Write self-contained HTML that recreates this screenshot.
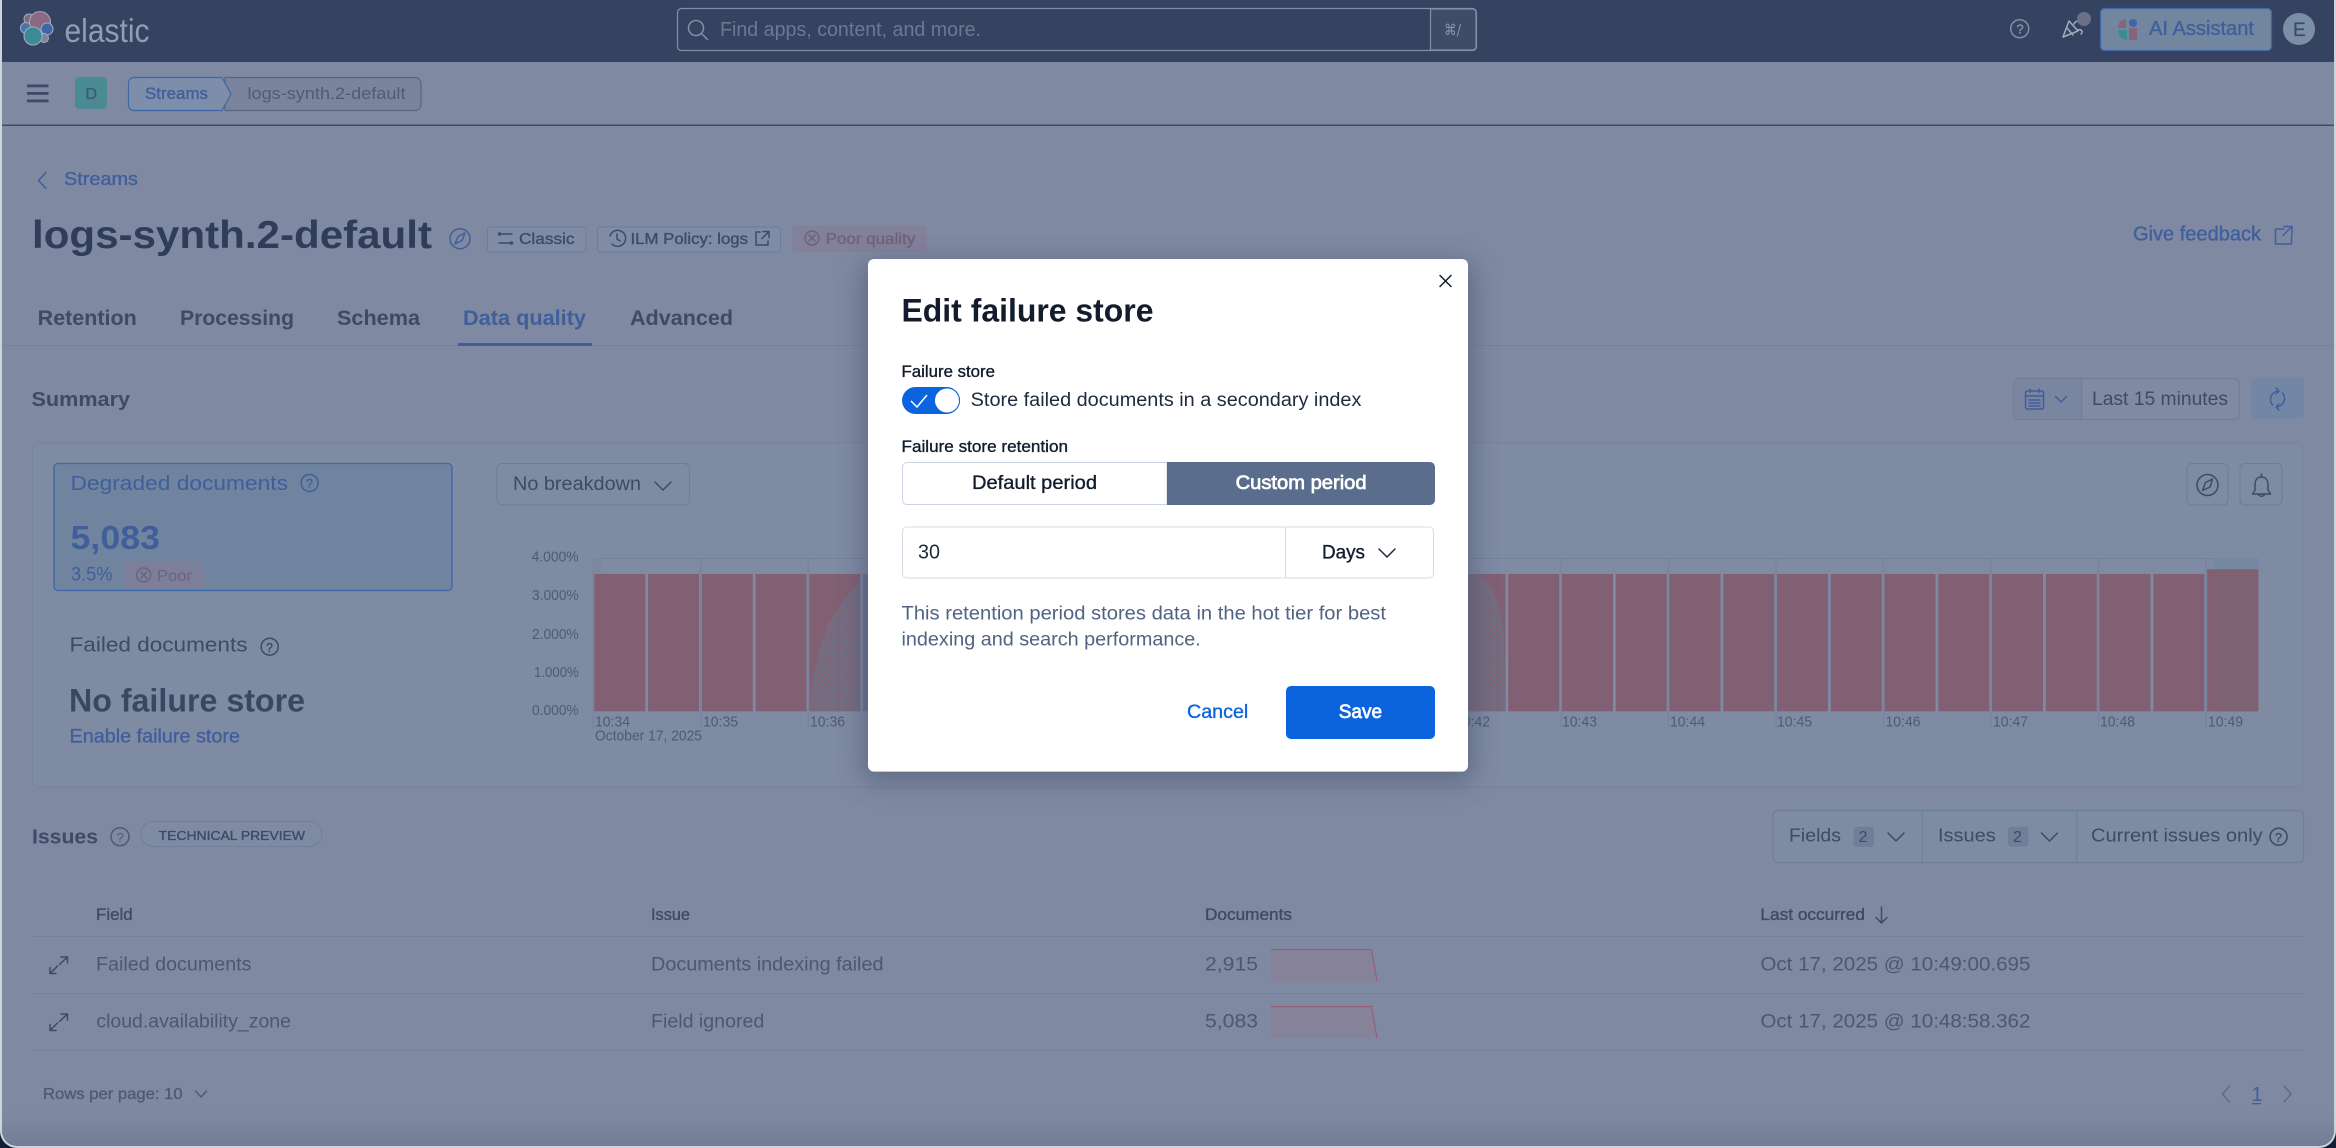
<!DOCTYPE html>
<html><head><meta charset="utf-8"><title>Edit failure store</title>
<style>
html,body{margin:0;padding:0;background:#7f89a2;width:2336px;height:1148px;overflow:hidden}
svg{display:block}
text{font-family:"Liberation Sans",sans-serif;fill:currentColor;color:#4c5872}
.m{stroke:currentColor;stroke-width:.35px}
.s{stroke:currentColor;stroke-width:.7px}
.B{font-weight:bold}
.b{color:#3f5f9b}.d{color:#3e4a66}.g{color:#4f5a74}.t{color:#2f3d5a}.k{color:#111c2c}
.ic{fill:none;stroke-width:1.5;stroke-linecap:round;stroke-linejoin:round}
</style></head><body>
<svg width="2336" height="1148" viewBox="0 0 2336 1148" xmlns="http://www.w3.org/2000/svg">
<defs>
<linearGradient id="bot" gradientUnits="userSpaceOnUse" x1="0" y1="1108" x2="0" y2="1146"><stop offset="0" stop-color="#7f89a2"/><stop offset=".3" stop-color="#7d88a0"/><stop offset="1" stop-color="#727d93"/></linearGradient>
<pattern id="dots" width="3" height="3" patternUnits="userSpaceOnUse"><rect width="3" height="3" fill="#82626f"/><rect x="0" y="0" width="1.8" height="1.8" fill="#68728e"/><rect x="1.5" y="1.5" width="1.3" height="1.3" fill="#74768a"/></pattern>
<pattern id="dots2" width="4" height="4" patternUnits="userSpaceOnUse"><rect width="4" height="4" fill="#7f606f"/><rect x="1" y="1" width="1.6" height="1.6" fill="#6e6c84"/></pattern>
<filter id="blur" x="-20%" y="-20%" width="140%" height="140%"><feGaussianBlur stdDeviation="13"/></filter>
</defs>

<!-- frame -->
<rect width="2336" height="1148" fill="#101f36"/>
<rect x="0" y="-20" width="2336" height="1168" rx="17" fill="#cfd3db"/>
<rect x="2" y="-20" width="2332" height="1166" rx="15" fill="url(#bot)"/>

<!-- top bar -->
<rect x="2" y="0" width="2332" height="62" fill="#354360"/>
<g stroke="#a3adc0" stroke-width="1">
<circle cx="29" cy="19" r="5" fill="#85687e"/>
<circle cx="26" cy="28" r="5.5" fill="#4a74ab"/>
<circle cx="40" cy="22" r="10.5" fill="#8a6a80"/>
<circle cx="47" cy="29" r="6" fill="#3f66a8"/>
<circle cx="44" cy="38" r="4.5" fill="#7e8699"/>
<circle cx="33" cy="36" r="9" fill="#3c8a94"/>
</g>
<text x="64.500" y="42" font-size="33" textLength="85" lengthAdjust="spacingAndGlyphs" style="color:#929db3">elastic</text>

<rect x="677.500" y="8.500" width="799" height="42" rx="4" fill="#354360" stroke="#838da6" stroke-width="1.200"/>
<path d="M1430.500 9h42a3.500 3.500 0 0 1 3.500 3.500v34a3.500 3.500 0 0 1-3.500 3.500h-42z" fill="#3f4c68" stroke="#838da6" stroke-width="1.200"/>
<g class="ic" stroke="#838da6"><circle cx="696" cy="28" r="7.500"/><path d="M701.500 33.500l6 6"/></g>
<text x="720" y="36" font-size="20" textLength="261" lengthAdjust="spacingAndGlyphs" style="color:#6d7892">Find apps, content, and more.</text>
<text x="1444" y="35" font-size="15" textLength="17" lengthAdjust="spacingAndGlyphs" style="color:#8a93ab;font-family:'DejaVu Sans',sans-serif">⌘/</text>

<g class="ic" stroke="#838da6"><circle cx="2019.700" cy="28.700" r="9"/></g>
<text x="2016.500" y="33.500" font-size="13" class="m" style="color:#8a93ab">?</text>
<g class="ic" stroke="#a3adc0"><path d="M2063 37l6-16 9 10zM2067 28l6 7M2074 24c1-2 2-3 4-3M2078 30c2-1 3 0 4 1 0 1 0 3-1 3"/></g>
<circle cx="2084" cy="19" r="7" fill="#6b7088"/>
<rect x="2100.500" y="8.500" width="171" height="42" rx="4" fill="#72869f" stroke="#3f66a8" stroke-width="1.300"/>
<path d="M2118 28c0-5 3-9 8-9v9z" fill="#86657b"/><circle cx="2133" cy="23" r="4" fill="#3f66a8"/>
<path d="M2127 30v10c-5 0-9-4-9-10z" fill="#3c8a94"/><rect x="2129" y="28" width="8" height="12" fill="#86657b"/>
<text x="2149" y="35" font-size="20" textLength="105" lengthAdjust="spacingAndGlyphs" class="b m">AI Assistant</text>
<circle cx="2299" cy="29" r="16" fill="#7a8fa5"/>
<text x="2293" y="36" font-size="19" class="d m">E</text>

<!-- subheader -->
<g fill="#3e4a66"><rect x="27" y="84.500" width="21.500" height="2.800"/><rect x="27" y="92" width="21.500" height="2.800"/><rect x="27" y="99.500" width="21.500" height="2.800"/></g>
<rect x="75" y="77" width="32" height="32" rx="4" fill="#4a8a93"/>
<text x="85.500" y="99" font-size="16" class="m" style="color:#3f5a70">D</text>
<path d="M225 77.500h190a6 6 0 0 1 6 6v21a6 6 0 0 1-6 6h-190z" fill="#7a849d" stroke="#5a6580" stroke-width="1.200"/>
<path d="M134 77.500h88l9 16.500-9 16.500h-88a5.500 5.500 0 0 1-5.500-5.500v-22a5.500 5.500 0 0 1 5.500-5.500z" fill="#7c8eaa" stroke="#3f66a8" stroke-width="1.200"/>
<text x="145" y="99" font-size="17" textLength="63" lengthAdjust="spacingAndGlyphs" class="b m">Streams</text>
<text x="247.500" y="99" font-size="17" textLength="158" lengthAdjust="spacingAndGlyphs" style="color:#505b75">logs-synth.2-default</text>
<rect x="2" y="124.500" width="2332" height="1.500" fill="#3f4b66"/>

<!-- back link + title -->
<path class="ic" d="M46 172.500l-7.500 8 7.500 8" stroke="#3f5f9b"/>
<text x="64" y="185" font-size="18.500" textLength="74" lengthAdjust="spacingAndGlyphs" class="b m">Streams</text>
<text x="32" y="248" font-size="39" textLength="400" lengthAdjust="spacingAndGlyphs" class="t B">logs-synth.2-default</text>
<g class="ic" stroke="#3f5f9b"><circle cx="460" cy="238.700" r="10"/><path d="M465 233l-7 3.500-3 7.500 7-3.500z"/></g>

<rect x="487.500" y="227" width="98.500" height="25" rx="3" fill="#808ca6" stroke="#6d7c9a"/>
<g class="ic" stroke="#3e4a66"><path d="M499 234h13M499 243h13"/><circle cx="499.500" cy="234" r="1"/><circle cx="511.500" cy="243" r="1"/></g>
<text x="519" y="244" font-size="16" textLength="55.500" lengthAdjust="spacingAndGlyphs" class="d m">Classic</text>
<rect x="597.500" y="227" width="183" height="25" rx="3" fill="#808ca6" stroke="#6d7c9a"/>
<g class="ic" stroke="#3e4a66"><path d="M612 244a8 8 0 1 0-2-8M617 234v5l3 2"/></g>
<text x="630.500" y="244" font-size="16" textLength="117.500" lengthAdjust="spacingAndGlyphs" class="d m">ILM Policy: logs</text>
<g class="ic" stroke="#3e4a66"><path d="M760 232h-4v13h12v-4M763 231.500h6v6M769 231.500l-7 7"/></g>
<rect x="792.500" y="226" width="134.500" height="25.700" rx="3" fill="#83809a"/>
<g class="ic" stroke="#6f627c"><circle cx="812" cy="238" r="7"/><path d="M809 235l6 6M815 235l-6 6"/></g>
<text x="825.700" y="244" font-size="16" textLength="89.500" lengthAdjust="spacingAndGlyphs" class="m" style="color:#6f627c">Poor quality</text>

<text x="2133" y="240.700" font-size="20" textLength="128" lengthAdjust="spacingAndGlyphs" class="b m">Give feedback</text>
<g class="ic" stroke="#3f5f9b"><path d="M2284 229h-8.500v15h16v-8M2284 226.500h8v8M2292 226.500l-9 9"/></g>

<!-- tabs -->
<rect x="2" y="345" width="2332" height="1" fill="#76829c"/>
<text x="37.700" y="325" font-size="21" textLength="99" lengthAdjust="spacingAndGlyphs" class="d B">Retention</text>
<text x="180" y="325" font-size="21" textLength="114" lengthAdjust="spacingAndGlyphs" class="d B">Processing</text>
<text x="337" y="325" font-size="21" textLength="83" lengthAdjust="spacingAndGlyphs" class="d B">Schema</text>
<text x="463" y="325" font-size="21" textLength="123" lengthAdjust="spacingAndGlyphs" class="b B">Data quality</text>
<text x="630" y="325" font-size="21" textLength="103" lengthAdjust="spacingAndGlyphs" class="d B">Advanced</text>
<rect x="458" y="343" width="134" height="3" fill="#3f5f9b"/>

<!-- summary -->
<text x="31.500" y="406" font-size="20" textLength="98.500" lengthAdjust="spacingAndGlyphs" class="d B">Summary</text>
<rect x="2013.500" y="378.500" width="225.500" height="41" rx="5" fill="#808aa3" stroke="#6d7c9a"/>
<path d="M2018 379h63.500v40h-63.500a4.500 4.500 0 0 1-4.500-4.500v-31a4.500 4.500 0 0 1 4.500-4.500z" fill="#7a859f"/>
<path d="M2081.700 379v40" stroke="#6d7c9a"/>
<g class="ic" stroke="#3f5f9b"><rect x="2025.500" y="391" width="18" height="18" rx="2"/><path d="M2025.500 396h18M2030 389v3.500M2039 389v3.500M2029 400h11M2029 403h11M2029 406h11"/></g>
<path class="ic" d="M2055.500 396.500l5.500 5.500 5.500-5.500" stroke="#3f5f9b"/>
<text x="2092" y="405" font-size="19.500" textLength="136" lengthAdjust="spacingAndGlyphs" class="d">Last 15 minutes</text>
<rect x="2251" y="378" width="53" height="41" rx="5" fill="#7386a5"/>
<g class="ic" stroke="#3f5f9b"><path d="M2279 391a8.500 8.500 0 0 0-6.500 14M2276 388l3 3-3 3M2276 407a8.500 8.500 0 0 0 6.500-14M2279 404l-3 3 3 3"/></g>

<!-- panel -->
<rect x="32.500" y="443" width="2270.500" height="344" rx="6" fill="#7f8aa3" stroke="#77839d"/>
<rect x="54" y="463.500" width="398" height="127" rx="4" fill="#71849f" stroke="#3f66a8" stroke-width="1.300"/>
<text x="70.500" y="490" font-size="20.500" textLength="217.500" lengthAdjust="spacingAndGlyphs" class="b">Degraded documents</text>
<g class="ic" stroke="#3f5f9b"><circle cx="309.600" cy="483" r="8.500"/></g>
<text x="306" y="488" font-size="12.500" class="b m">?</text>
<text x="70.500" y="549" font-size="33" textLength="89.500" lengthAdjust="spacingAndGlyphs" class="b B">5,083</text>
<text x="71" y="580.500" font-size="19" textLength="41.500" lengthAdjust="spacingAndGlyphs" class="b">3.5%</text>
<rect x="124" y="561.700" width="79.700" height="25.500" rx="3" fill="#7c7e9a"/>
<g class="ic" stroke="#6f627c"><circle cx="143.700" cy="575" r="7"/><path d="M141 572l5.500 6M146.500 572l-5.500 6"/></g>
<text x="157" y="581" font-size="16" textLength="35" lengthAdjust="spacingAndGlyphs" style="color:#6f627c">Poor</text>

<text x="69.500" y="651.500" font-size="20.500" textLength="178" lengthAdjust="spacingAndGlyphs" class="d">Failed documents</text>
<g class="ic" stroke="#3e4a66"><circle cx="269.700" cy="646.700" r="8.500"/></g>
<text x="266" y="652" font-size="12.500" class="d m">?</text>
<text x="69" y="711.500" font-size="32" textLength="236" lengthAdjust="spacingAndGlyphs" class="B" style="color:#3a4763">No failure store</text>
<text x="69.500" y="742.700" font-size="19" textLength="170.500" lengthAdjust="spacingAndGlyphs" class="b m">Enable failure store</text>

<rect x="497" y="463.500" width="192.500" height="41.500" rx="5" fill="#7f8aa3" stroke="#6d7c9a"/>
<text x="513" y="490" font-size="19" textLength="128" lengthAdjust="spacingAndGlyphs" class="d">No breakdown</text>
<path class="ic" d="M655 482l8 8 8-8" stroke="#3e4a66"/>
<rect x="2187" y="463.500" width="41" height="41.500" rx="5" fill="#7f8aa3" stroke="#6d7c9a"/>
<g class="ic" stroke="#3e4a66"><circle cx="2207.500" cy="485" r="10.500"/><path d="M2212.500 479l-7 3.500-3 8 7.500-3.500z"/></g>
<rect x="2240" y="463.500" width="42" height="41.500" rx="5" fill="#7f8aa3" stroke="#6d7c9a"/>
<g class="ic" stroke="#3e4a66"><path d="M2261.500 474v3M2261.500 477c-5 0-6.500 4-6.500 8v5l-2.500 4h18l-2.500-4v-5c0-4-1.500-8-6.500-8zM2258.500 494c0 3 6 3 6 0"/></g>

<!-- chart -->
<g font-size="14.500">
<text x="531.600" y="561.700" textLength="47" lengthAdjust="spacingAndGlyphs" class="g">4.000%</text>
<text x="532" y="600" textLength="46.800" lengthAdjust="spacingAndGlyphs" class="g">3.000%</text>
<text x="532" y="639" textLength="46.800" lengthAdjust="spacingAndGlyphs" class="g">2.000%</text>
<text x="534" y="677" textLength="44.800" lengthAdjust="spacingAndGlyphs" class="g">1.000%</text>
<text x="532" y="715" textLength="46.800" lengthAdjust="spacingAndGlyphs" class="g">0.000%</text>
</g>
<g fill="#75829c">
<rect x="592.700" y="558" width="1666" height="1"/><rect x="592.700" y="558" width="1" height="170"/>
<rect x="700.200" y="558" width="1" height="170"/><rect x="807.700" y="558" width="1" height="170"/>
<rect x="1453" y="558" width="1" height="170"/><rect x="1560.500" y="558" width="1" height="170"/><rect x="1668" y="558" width="1" height="170"/><rect x="1775.500" y="558" width="1" height="170"/><rect x="1883" y="558" width="1" height="170"/><rect x="1990.500" y="558" width="1" height="170"/><rect x="2098" y="558" width="1" height="170"/><rect x="2205.500" y="558" width="1" height="170"/>
</g>
<rect x="593" y="558" width="8" height="16" fill="#79889f"/>
<rect x="2214" y="558" width="44.300" height="12" fill="#75889f"/>
<g fill="#826073">
<rect x="594.300" y="574" width="51" height="137.300"/><rect x="648.060" y="574" width="51" height="137.300"/><rect x="701.820" y="574" width="51" height="137.300"/><rect x="755.580" y="574" width="51" height="137.300"/><rect x="809.340" y="574" width="51" height="137.300"/><rect x="863.100" y="574" width="51" height="137.300"/><rect x="916.860" y="574" width="51" height="137.300"/><rect x="970.620" y="574" width="51" height="137.300"/><rect x="1024.380" y="574" width="51" height="137.300"/><rect x="1078.140" y="574" width="51" height="137.300"/><rect x="1131.900" y="574" width="51" height="137.300"/><rect x="1185.660" y="574" width="51" height="137.300"/><rect x="1239.420" y="574" width="51" height="137.300"/><rect x="1293.180" y="574" width="51" height="137.300"/><rect x="1346.940" y="574" width="51" height="137.300"/><rect x="1400.700" y="574" width="51" height="137.300"/><rect x="1454.460" y="574" width="51" height="137.300"/><rect x="1508.220" y="574" width="51" height="137.300"/><rect x="1561.980" y="574" width="51" height="137.300"/><rect x="1615.740" y="574" width="51" height="137.300"/><rect x="1669.500" y="574" width="51" height="137.300"/><rect x="1723.260" y="574" width="51" height="137.300"/><rect x="1777.020" y="574" width="51" height="137.300"/><rect x="1830.780" y="574" width="51" height="137.300"/><rect x="1884.540" y="574" width="51" height="137.300"/><rect x="1938.300" y="574" width="51" height="137.300"/><rect x="1992.060" y="574" width="51" height="137.300"/><rect x="2045.820" y="574" width="51" height="137.300"/><rect x="2099.580" y="574" width="51" height="137.300"/><rect x="2153.340" y="574" width="51" height="137.300"/><rect x="2207.100" y="569.300" width="51.200" height="142"/>
</g>
<rect x="2214" y="569.300" width="44.300" height="142" fill="url(#dots2)"/>
<path d="M860 580L840 605 828 625 818 655 811 690 810 711H860z" fill="url(#dots)"/>
<rect x="863" y="574" width="6" height="137" fill="#6d7092"/>
<path d="M1468 574h10c14 10 23 30 26 60l1 77h-37z" fill="url(#dots)"/>
<g font-size="15" class="g">
<text x="595" y="726.700" textLength="35" lengthAdjust="spacingAndGlyphs" class="g">10:34</text>
<text x="595" y="740.700" textLength="107" lengthAdjust="spacingAndGlyphs" class="g">October 17, 2025</text>
<text x="703" y="726.700" textLength="35" lengthAdjust="spacingAndGlyphs" class="g">10:35</text>
<text x="810" y="726.700" textLength="35" lengthAdjust="spacingAndGlyphs" class="g">10:36</text>
<text x="1455" y="726.700" textLength="35" lengthAdjust="spacingAndGlyphs" class="g">10:42</text>
<text x="1562" y="726.700" textLength="35" lengthAdjust="spacingAndGlyphs" class="g">10:43</text>
<text x="1670" y="726.700" textLength="35" lengthAdjust="spacingAndGlyphs" class="g">10:44</text>
<text x="1777" y="726.700" textLength="35" lengthAdjust="spacingAndGlyphs" class="g">10:45</text>
<text x="1885.500" y="726.700" textLength="35" lengthAdjust="spacingAndGlyphs" class="g">10:46</text>
<text x="1993" y="726.700" textLength="35" lengthAdjust="spacingAndGlyphs" class="g">10:47</text>
<text x="2100" y="726.700" textLength="35" lengthAdjust="spacingAndGlyphs" class="g">10:48</text>
<text x="2208" y="726.700" textLength="35" lengthAdjust="spacingAndGlyphs" class="g">10:49</text>
</g>

<!-- issues -->
<text x="32" y="843.700" font-size="20.500" textLength="66" lengthAdjust="spacingAndGlyphs" class="d B">Issues</text>
<g class="ic" stroke="#4f5a74"><circle cx="120" cy="836.700" r="9"/></g>
<text x="116.500" y="842" font-size="13" class="g">?</text>
<rect x="141" y="821.500" width="181" height="25" rx="12.500" fill="#7f8aa3" stroke="#6f7e9a"/>
<text x="158.700" y="840" font-size="13" textLength="146.300" lengthAdjust="spacingAndGlyphs" class="d m">TECHNICAL PREVIEW</text>

<rect x="1773" y="810.500" width="530.500" height="52" rx="5" fill="#7f8aa3" stroke="#6c7f9c" stroke-width="1.200"/>
<path d="M1922.300 811v51M2076.600 811v51" stroke="#6c7f9c"/>
<text x="1789" y="841.700" font-size="18.500" textLength="52" lengthAdjust="spacingAndGlyphs" class="d">Fields</text>
<rect x="1853.500" y="826.700" width="20.500" height="20" rx="3" fill="#727e98"/>
<text x="1858.500" y="842" font-size="16" class="d">2</text>
<path class="ic" d="M1888 833l8 8 8-8" stroke="#3e4a66"/>
<text x="1938" y="841.700" font-size="18.500" textLength="57.700" lengthAdjust="spacingAndGlyphs" class="d">Issues</text>
<rect x="2008" y="826.700" width="20.500" height="20" rx="3" fill="#727e98"/>
<text x="2013" y="842" font-size="16" class="d">2</text>
<path class="ic" d="M2041.500 833l8 8 8-8" stroke="#3e4a66"/>
<text x="2091" y="841.700" font-size="18.500" textLength="171.700" lengthAdjust="spacingAndGlyphs" class="d">Current issues only</text>
<g class="ic" stroke="#3e4a66"><circle cx="2278.600" cy="836.700" r="8.500"/></g>
<text x="2275" y="842" font-size="12.500" class="d m">?</text>

<text x="96" y="920" font-size="16.500" textLength="36.600" lengthAdjust="spacingAndGlyphs" class="d m">Field</text>
<text x="651" y="920" font-size="16.500" textLength="39" lengthAdjust="spacingAndGlyphs" class="d m">Issue</text>
<text x="1205" y="920" font-size="16.500" textLength="87" lengthAdjust="spacingAndGlyphs" class="d m">Documents</text>
<text x="1760.400" y="920" font-size="16.500" textLength="104.600" lengthAdjust="spacingAndGlyphs" class="d m">Last occurred</text>
<path class="ic" d="M1881.500 907v16M1876 917.500l5.500 5.500 5.500-5.500" stroke="#3e4a66"/>
<g fill="#75829b"><rect x="32" y="936" width="2272" height="1"/><rect x="32" y="993" width="2272" height="1"/><rect x="32" y="1050" width="2272" height="1"/></g>

<g class="ic" stroke="#3e4a66" stroke-width="1.200"><path d="M50 973.500l7.500-7.500M50 967.500v6h6M59.500 964.500l8-7.500M61 957h6.500v6"/><path d="M50 1030.500l7.500-7.500M50 1024.500v6h6M59.500 1021.500l8-7.500M61 1014h6.500v6"/></g>
<text x="96" y="970.700" font-size="19" textLength="155.500" lengthAdjust="spacingAndGlyphs">Failed documents</text>
<text x="96.400" y="1027.700" font-size="19" textLength="194.500" lengthAdjust="spacingAndGlyphs">cloud.availability_zone</text>
<text x="651" y="970.700" font-size="19" textLength="232.500" lengthAdjust="spacingAndGlyphs">Documents indexing failed</text>
<text x="651" y="1027.700" font-size="19" textLength="113.300" lengthAdjust="spacingAndGlyphs">Field ignored</text>
<text x="1205" y="970.700" font-size="19" textLength="53" lengthAdjust="spacingAndGlyphs">2,915</text>
<text x="1205" y="1027.700" font-size="19" textLength="53" lengthAdjust="spacingAndGlyphs">5,083</text>
<path d="M1271 949h100.500l5.500 32h-106z" fill="#85829a"/><path d="M1271 949.500h100.500l5.500 31.500" fill="none" stroke="#9a5f72" stroke-width="1.200"/>
<path d="M1271 1006h100.500l5.500 32h-106z" fill="#85829a"/><path d="M1271 1006.500h100.500l5.500 31.500" fill="none" stroke="#9a5f72" stroke-width="1.200"/>
<text x="1760.400" y="970.700" font-size="19" textLength="270" lengthAdjust="spacingAndGlyphs">Oct 17, 2025 @ 10:49:00.695</text>
<text x="1760.400" y="1027.700" font-size="19" textLength="270" lengthAdjust="spacingAndGlyphs">Oct 17, 2025 @ 10:48:58.362</text>

<text x="43" y="1099" font-size="16" textLength="139.600" lengthAdjust="spacingAndGlyphs" class="g m">Rows per page: 10</text>
<path class="ic" d="M195.500 1091l5.500 6 5.500-6" stroke="#4f5a74"/>
<path class="ic" d="M2229.500 1086l-7 8 7 8M2284 1086l7 8-7 8" stroke="#5f6b86"/>
<text x="2251.500" y="1101" font-size="20" class="b">1</text><rect x="2252" y="1103" width="9" height="1.300" fill="#3f5f9b"/>

<!-- modal -->
<rect x="862" y="262" width="612" height="520" rx="10" fill="#3b4663" opacity=".45" filter="url(#blur)"/>
<rect x="868" y="259" width="600" height="512.600" rx="6" fill="#fff"/>
<path d="M1440 275.500l11 11M1451 275.500l-11 11" stroke="#111c2c" stroke-width="1.500" stroke-linecap="round"/>
<text x="901.500" y="321.700" font-size="32" textLength="252" lengthAdjust="spacingAndGlyphs" class="k B">Edit failure store</text>
<text x="901.500" y="377" font-size="16.500" textLength="93.500" lengthAdjust="spacingAndGlyphs" class="k m">Failure store</text>
<rect x="902" y="387" width="58" height="27" rx="13.500" fill="#0b64dd"/>
<circle cx="947" cy="400.500" r="12.500" fill="#fff" stroke="#0b64dd" stroke-width="1"/>
<path d="M911 401l6 6 10-12" fill="none" stroke="#fff" stroke-width="1.500"/>
<text x="970.700" y="406" font-size="19" textLength="390.700" lengthAdjust="spacingAndGlyphs" style="color:#1d2a3e">Store failed documents in a secondary index</text>
<text x="901.500" y="452" font-size="16.500" textLength="166.500" lengthAdjust="spacingAndGlyphs" class="k m">Failure store retention</text>

<path d="M1167 462.500H907a4.500 4.500 0 0 0-4.500 4.500v33a4.500 4.500 0 0 0 4.500 4.500h260z" fill="#fff" stroke="#cad3e2"/>
<path d="M1167 462h263a5 5 0 0 1 5 5v33a5 5 0 0 1-5 5h-263z" fill="#5a6d8c"/>
<text x="972" y="489" font-size="19.500" textLength="125" lengthAdjust="spacingAndGlyphs" class="k m">Default period</text>
<text x="1235.600" y="489" font-size="19.500" textLength="131" lengthAdjust="spacingAndGlyphs" class="s" style="color:#fff">Custom period</text>

<rect x="902.500" y="527" width="531" height="51" rx="4.500" fill="#fff" stroke="#d5dcE8" stroke-width="1"/>
<path d="M1285.500 527v51" stroke="#d5dce8" stroke-width="1"/>
<text x="918" y="558.600" font-size="20" textLength="22" lengthAdjust="spacingAndGlyphs" style="color:#1d2a3e">30</text>
<text x="1322" y="558.600" font-size="19.500" textLength="43" lengthAdjust="spacingAndGlyphs" class="k m">Days</text>
<path class="ic" d="M1379 549l8 8 8-8" stroke="#1d2a3e"/>
<text x="901.500" y="619.500" font-size="19" textLength="484.500" lengthAdjust="spacingAndGlyphs" style="color:#516381">This retention period stores data in the hot tier for best</text>
<text x="901.500" y="645.500" font-size="19" textLength="299.300" lengthAdjust="spacingAndGlyphs" style="color:#516381">indexing and search performance.</text>
<text x="1187" y="718" font-size="19.500" textLength="61.300" lengthAdjust="spacingAndGlyphs" class="m" style="color:#0b64dd">Cancel</text>
<rect x="1286" y="686" width="149" height="53" rx="5" fill="#0b64dd"/>
<text x="1338.800" y="718" font-size="19.500" textLength="43.200" lengthAdjust="spacingAndGlyphs" class="s" style="color:#fff">Save</text>
</svg>
</body></html>
